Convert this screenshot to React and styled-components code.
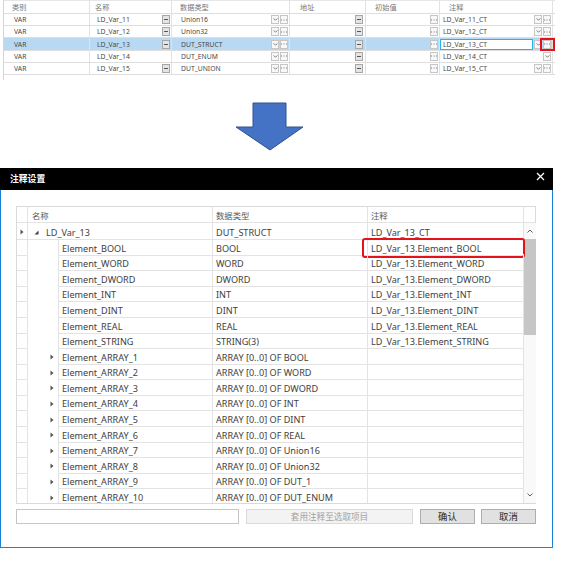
import React from "react";
import styled, { createGlobalStyle } from "styled-components";

const GlobalStyle = createGlobalStyle`
  html, body { margin: 0; padding: 0; background: #fff; }
  body {
    width: 568px;
    height: 564px;
    overflow: hidden;
    font-family: "Noto Sans", "Noto Sans CJK SC", sans-serif;
  }
`;

const vars = [
  { name: "LD_Var_11", type: "Union16", ct: "LD_Var_11_CT", nameBtn: true },
  { name: "LD_Var_12", type: "Union32", ct: "LD_Var_12_CT", nameBtn: true },
  { name: "LD_Var_13", type: "DUT_STRUCT", ct: "LD_Var_13_CT", nameBtn: true, selected: true },
  { name: "LD_Var_14", type: "DUT_ENUM", ct: "LD_Var_14_CT", nameBtn: false, ctOnlyDrop: true },
  { name: "LD_Var_15", type: "DUT_UNION", ct: "LD_Var_15_CT", nameBtn: true },
];

const members = [
  ["Element_BOOL", "BOOL", "LD_Var_13.Element_BOOL"],
  ["Element_WORD", "WORD", "LD_Var_13.Element_WORD"],
  ["Element_DWORD", "DWORD", "LD_Var_13.Element_DWORD"],
  ["Element_INT", "INT", "LD_Var_13.Element_INT"],
  ["Element_DINT", "DINT", "LD_Var_13.Element_DINT"],
  ["Element_REAL", "REAL", "LD_Var_13.Element_REAL"],
  ["Element_STRING", "STRING(3)", "LD_Var_13.Element_STRING"],
  ["Element_ARRAY_1", "ARRAY [0..0] OF BOOL", "", true],
  ["Element_ARRAY_2", "ARRAY [0..0] OF WORD", "", true],
  ["Element_ARRAY_3", "ARRAY [0..0] OF DWORD", "", true],
  ["Element_ARRAY_4", "ARRAY [0..0] OF INT", "", true],
  ["Element_ARRAY_5", "ARRAY [0..0] OF DINT", "", true],
  ["Element_ARRAY_6", "ARRAY [0..0] OF REAL", "", true],
  ["Element_ARRAY_7", "ARRAY [0..0] OF Union16", "", true],
  ["Element_ARRAY_8", "ARRAY [0..0] OF Union32", "", true],
  ["Element_ARRAY_9", "ARRAY [0..0] OF DUT_1", "", true],
  ["Element_ARRAY_10", "ARRAY [0..0] OF DUT_ENUM", "", true],
];

/* ---------- small glyphs ---------- */
const Chevron = ({ up, color = "#555", w = 5, h = 3 }) => (
  <svg width={w} height={h} viewBox="0 0 6 4">
    <path
      d={up ? "M0.5 3.5 L3 1 L5.5 3.5" : "M0.5 0.5 L3 3 L5.5 0.5"}
      fill="none"
      stroke={color}
      strokeWidth="1"
    />
  </svg>
);

const Ellipsis = () => (
  <svg width="6" height="2" viewBox="0 0 6 2">
    <rect x="0" y="0.5" width="1" height="1" fill="#777" />
    <rect x="2.5" y="0.5" width="1" height="1" fill="#777" />
    <rect x="5" y="0.5" width="1" height="1" fill="#777" />
  </svg>
);

const Collapsed = () => (
  <svg width="4" height="6" viewBox="0 0 4 6">
    <path d="M0.5 0.5 L3.5 3 L0.5 5.5 Z" fill="#555" />
  </svg>
);

const Expanded = () => (
  <svg width="5" height="5" viewBox="0 0 5 5">
    <path d="M4.5 0.5 L4.5 4.5 L0.5 4.5 Z" fill="#444" />
  </svg>
);

/* ---------- top variable table ---------- */
const Page = styled.div`
  display: flex;
  flex-direction: column;
  width: 568px;
`;

const VarTable = styled.div`
  margin-left: 3px;
  width: 551px;
  border-left: 1px solid #d4d4d4;
  padding-bottom: 5px;
  color: #555;
  font-size: 6.8px;
`;

const VarRow = styled.div`
  display: grid;
  grid-template-columns: 86px 82px 118px 76px 74px 113px;
  height: ${(p) => (p.$head ? "14px" : "12.2px")};
  box-sizing: border-box;
  border-top: ${(p) => (p.$head ? "1px solid #e6e6e6" : "none")};
  border-bottom: 1px solid #dedede;
  background: ${(p) => (p.$sel ? "#b9d9f3" : "#fff")};
`;

const VarCell = styled.div`
  display: flex;
  align-items: center;
  padding-left: ${(p) => p.$pad}px;
  border-right: 1px solid #e2e2e2;
  min-width: 0;
  white-space: nowrap;
  color: ${(p) => (p.$head ? "#777" : "#4a4a4a")};
  font-size: ${(p) => (p.$head ? "7.2px" : "6.8px")};
`;

const Tools = styled.div`
  margin-left: auto;
  margin-right: ${(p) => p.$mr ?? 1}px;
  display: flex;
  align-items: center;
  height: 100%;
`;

const MiniBtn = styled.span`
  position: relative;
  width: 8px;
  height: 9px;
  box-sizing: border-box;
  margin-left: 1px;
  display: flex;
  align-items: center;
  justify-content: center;
  border: 1px solid ${(p) => (p.$dark ? "#a6a6a6" : "#c6c6c6")};
  background: ${(p) => (p.$dark ? "#e4e4e4" : "#f8f8f8")};
`;

const Dash = styled.span`
  width: 4px;
  height: 1px;
  background: #555;
`;

const RedMark = styled.span`
  position: absolute;
  left: -4px;
  right: -5px;
  top: -3px;
  bottom: -3px;
  border: 2px solid #e3121b;
`;

const EditBox = styled.div`
  flex: 1;
  align-self: stretch;
  margin-top: 1px;
  padding-left: 2px;
  display: flex;
  align-items: center;
  background: #fff;
  border: 1px solid #22b4ea;
`;

const DashBtn = () => (
  <MiniBtn $dark>
    <Dash />
  </MiniBtn>
);
const DotBtn = ({ marked }) => (
  <MiniBtn>
    <Ellipsis />
    {marked && <RedMark />}
  </MiniBtn>
);
const DropBtn = () => (
  <MiniBtn>
    <Chevron />
  </MiniBtn>
);

const VarRowView = ({ v }) => (
  <VarRow $sel={v.selected}>
    <VarCell $pad={10}>VAR</VarCell>
    <VarCell $pad={7}>
      {v.name}
      {v.nameBtn && (
        <Tools>
          <DashBtn />
        </Tools>
      )}
    </VarCell>
    <VarCell $pad={9}>
      {v.type}
      <Tools>
        <DropBtn />
        <DotBtn />
      </Tools>
    </VarCell>
    <VarCell $pad={0}>
      <Tools $mr={2}>
        <DashBtn />
      </Tools>
    </VarCell>
    <VarCell $pad={0}>
      <Tools>
        <DotBtn />
      </Tools>
    </VarCell>
    <VarCell $pad={v.selected ? 0 : 3}>
      {v.selected ? (
        <>
          <EditBox>{v.ct}</EditBox>
          <Tools>
            <DropBtn />
            <DotBtn marked />
          </Tools>
        </>
      ) : (
        <>
          {v.ct}
          <Tools>
            <DropBtn />
            {!v.ctOnlyDrop && <DotBtn />}
          </Tools>
        </>
      )}
    </VarCell>
  </VarRow>
);

/* ---------- arrow ---------- */
const ArrowWrap = styled.div`
  margin: 21px 0 0 235px;
  width: 70px;
  height: 52px;
`;

/* ---------- dialog ---------- */
const Dialog = styled.div`
  margin-top: 15px;
  width: 553px;
  height: 380px;
  box-sizing: border-box;
  border: 1px solid #1883d7;
  border-top: none;
  display: flex;
  flex-direction: column;
  background: #fff;
`;

const TitleBar = styled.div`
  height: 22px;
  margin: 0 -1px;
  background: #000;
  color: #fff;
  display: flex;
  align-items: center;
  padding: 0 8px 0 10px;
  font-family: "Noto Sans CJK SC", sans-serif;
  font-weight: 700;
  font-size: 8.8px;
`;

const CloseBtn = styled.span`
  margin-left: auto;
  align-self: flex-start;
  margin-top: 4px;
  display: flex;
`;

const Body = styled.div`
  padding: 16px 15px 0 15px;
  display: flex;
  flex-direction: column;
`;

const Grid = styled.div`
  width: 520px;
  height: 298px;
  box-sizing: border-box;
  border: 1px solid #dadada;
  border-right: none;
  display: flex;
  flex-direction: column;
  overflow: hidden;
  color: #3e3e3e;
  font-size: 9.1px;
`;

const GridRow = styled.div`
  display: grid;
  grid-template-columns: 11px 185px 155px 156px;
  height: ${(p) => (p.$head ? "16px" : "15.6px")};
  box-sizing: border-box;
  flex-shrink: 0;
`;

const HeadRow = styled(GridRow)`
  grid-template-columns: 11px 185px 155px 156px 12px;
`;

const GCell = styled.div`
  display: flex;
  align-items: center;
  box-sizing: border-box;
  padding-left: ${(p) => p.$pad || 0}px;
  padding-top: ${(p) => (p.$head ? 1 : 3)}px;
  border-right: 1px solid #e3e3e3;
  border-bottom: 1px solid #e3e3e3;
  white-space: nowrap;
  position: relative;
  color: ${(p) => (p.$head ? "#5a5a5a" : "inherit")};
  font-family: ${(p) =>
    p.$head ? '"Noto Sans CJK SC", sans-serif' : "inherit"};
  font-size: ${(p) => (p.$head ? "8.4px" : "inherit")};
  justify-content: ${(p) => (p.$center ? "center" : "flex-start")};
`;

const NameCell = styled.div`
  display: flex;
  border-right: 1px solid #e3e3e3;
  box-sizing: border-box;
  border-bottom: ${(p) => (p.$root ? "1px solid #e3e3e3" : "none")};
  align-items: ${(p) => (p.$root ? "center" : "stretch")};
  padding-left: ${(p) => (p.$root ? 6 : 0)}px;
  padding-top: ${(p) => (p.$root ? 3 : 0)}px;
`;

const Indent = styled.div`
  width: 30px;
  flex-shrink: 0;
  display: flex;
  align-items: center;
  justify-content: flex-end;
  padding: 2px 4px 0 0;
  box-sizing: border-box;
`;

const NameInner = styled.div`
  flex: 1;
  display: flex;
  align-items: center;
  padding: 3px 0 0 3px;
  border-left: 1px solid #e3e3e3;
  border-bottom: 1px solid #e3e3e3;
`;

const RootText = styled.span`
  margin-left: 7px;
`;

const RedBox = styled.span`
  position: absolute;
  left: -6px;
  right: -2px;
  top: -1px;
  bottom: -3px;
  border: 2px solid #e3121b;
  border-radius: 3px;
`;

const BodyWrap = styled.div`
  display: flex;
  flex: 1;
  min-height: 0;
`;

const Rows = styled.div`
  width: 507px;
  display: flex;
  flex-direction: column;
`;

const ScrollBar = styled.div`
  width: 12px;
  display: flex;
  flex-direction: column;
  background: #f9f9f9;
`;

const ScrollArrow = styled.div`
  height: 16px;
  display: flex;
  align-items: center;
  justify-content: center;
  flex-shrink: 0;
`;

const Thumb = styled.div`
  height: 96px;
  background: #c6c6c6;
  flex-shrink: 0;
`;

const Track = styled.div`
  flex: 1;
`;

const Footer = styled.div`
  margin-top: 5px;
  display: flex;
  align-items: center;
  height: 15px;
`;

const TextInput = styled.div`
  width: 223px;
  height: 15px;
  box-sizing: border-box;
  border: 1px solid #c6c6c6;
  background: #fff;
`;

const Button = styled.div`
  width: ${(p) => p.$w}px;
  height: 15px;
  margin-left: ${(p) => p.$ml}px;
  box-sizing: border-box;
  display: flex;
  align-items: center;
  justify-content: center;
  font-family: "Noto Sans CJK SC", sans-serif;
  font-size: ${(p) => (p.$disabled ? "8.6px" : "9.4px")};
  color: ${(p) => (p.$disabled ? "#a2a2a2" : "#2a2a2a")};
  background: ${(p) => (p.$disabled ? "#f3f3f3" : "#e1e1e1")};
  border: 1px solid ${(p) => (p.$disabled ? "#dadada" : "#adadad")};
`;

export default function App() {
  return (
    <>
      <GlobalStyle />
      <Page>
        <VarTable>
          <VarRow $head>
            <VarCell $head $pad={8}>类别</VarCell>
            <VarCell $head $pad={5}>名称</VarCell>
            <VarCell $head $pad={8}>数据类型</VarCell>
            <VarCell $head $pad={10}>地址</VarCell>
            <VarCell $head $pad={9}>初始值</VarCell>
            <VarCell $head $pad={9}>注释</VarCell>
          </VarRow>
          {vars.map((v) => (
            <VarRowView key={v.name} v={v} />
          ))}
        </VarTable>

        <ArrowWrap>
          <svg width="70" height="52" viewBox="0 0 70 52">
            <path
              d="M18 2 H51 V26 H68 L35 49 L1 26 H18 Z"
              fill="#4472c4"
              stroke="#2f528f"
              strokeWidth="1"
            />
          </svg>
        </ArrowWrap>

        <Dialog>
          <TitleBar>
            注释设置
            <CloseBtn>
              <svg width="9" height="9" viewBox="0 0 9 9">
                <path
                  d="M1 1 L8 8 M8 1 L1 8"
                  stroke="#fff"
                  strokeWidth="1.3"
                />
              </svg>
            </CloseBtn>
          </TitleBar>
          <Body>
            <Grid>
              <HeadRow $head>
                <GCell $head />
                <GCell $head $pad={4}>名称</GCell>
                <GCell $head $pad={3}>数据类型</GCell>
                <GCell $head $pad={3}>注释</GCell>
                <GCell $head style={{ borderRight: "1px solid #dadada" }} />
              </HeadRow>
              <BodyWrap>
                <Rows>
                  <GridRow>
                    <GCell $center>
                      <Collapsed />
                    </GCell>
                    <NameCell $root>
                      <Expanded />
                      <RootText>LD_Var_13</RootText>
                    </NameCell>
                    <GCell $pad={3}>DUT_STRUCT</GCell>
                    <GCell $pad={3}>LD_Var_13_CT</GCell>
                  </GridRow>
                  {members.map(([name, type, ct, hasKids], i) => (
                    <GridRow key={name}>
                      <GCell />
                      <NameCell>
                        <Indent>{hasKids && <Collapsed />}</Indent>
                        <NameInner>{name}</NameInner>
                      </NameCell>
                      <GCell $pad={3}>{type}</GCell>
                      <GCell $pad={3}>
                        {ct}
                        {i === 0 && <RedBox />}
                      </GCell>
                    </GridRow>
                  ))}
                </Rows>
                <ScrollBar>
                  <ScrollArrow>
                    <Chevron up color="#606060" w={6} h={4} />
                  </ScrollArrow>
                  <Thumb />
                  <Track />
                  <ScrollArrow>
                    <Chevron color="#606060" w={6} h={4} />
                  </ScrollArrow>
                </ScrollBar>
              </BodyWrap>
            </Grid>
            <Footer>
              <TextInput />
              <Button $w={167} $ml={7} $disabled>
                套用注释至选取项目
              </Button>
              <Button $w={55} $ml={7}>确认</Button>
              <Button $w={55} $ml={6}>取消</Button>
            </Footer>
          </Body>
        </Dialog>
      </Page>
    </>
  );
}
